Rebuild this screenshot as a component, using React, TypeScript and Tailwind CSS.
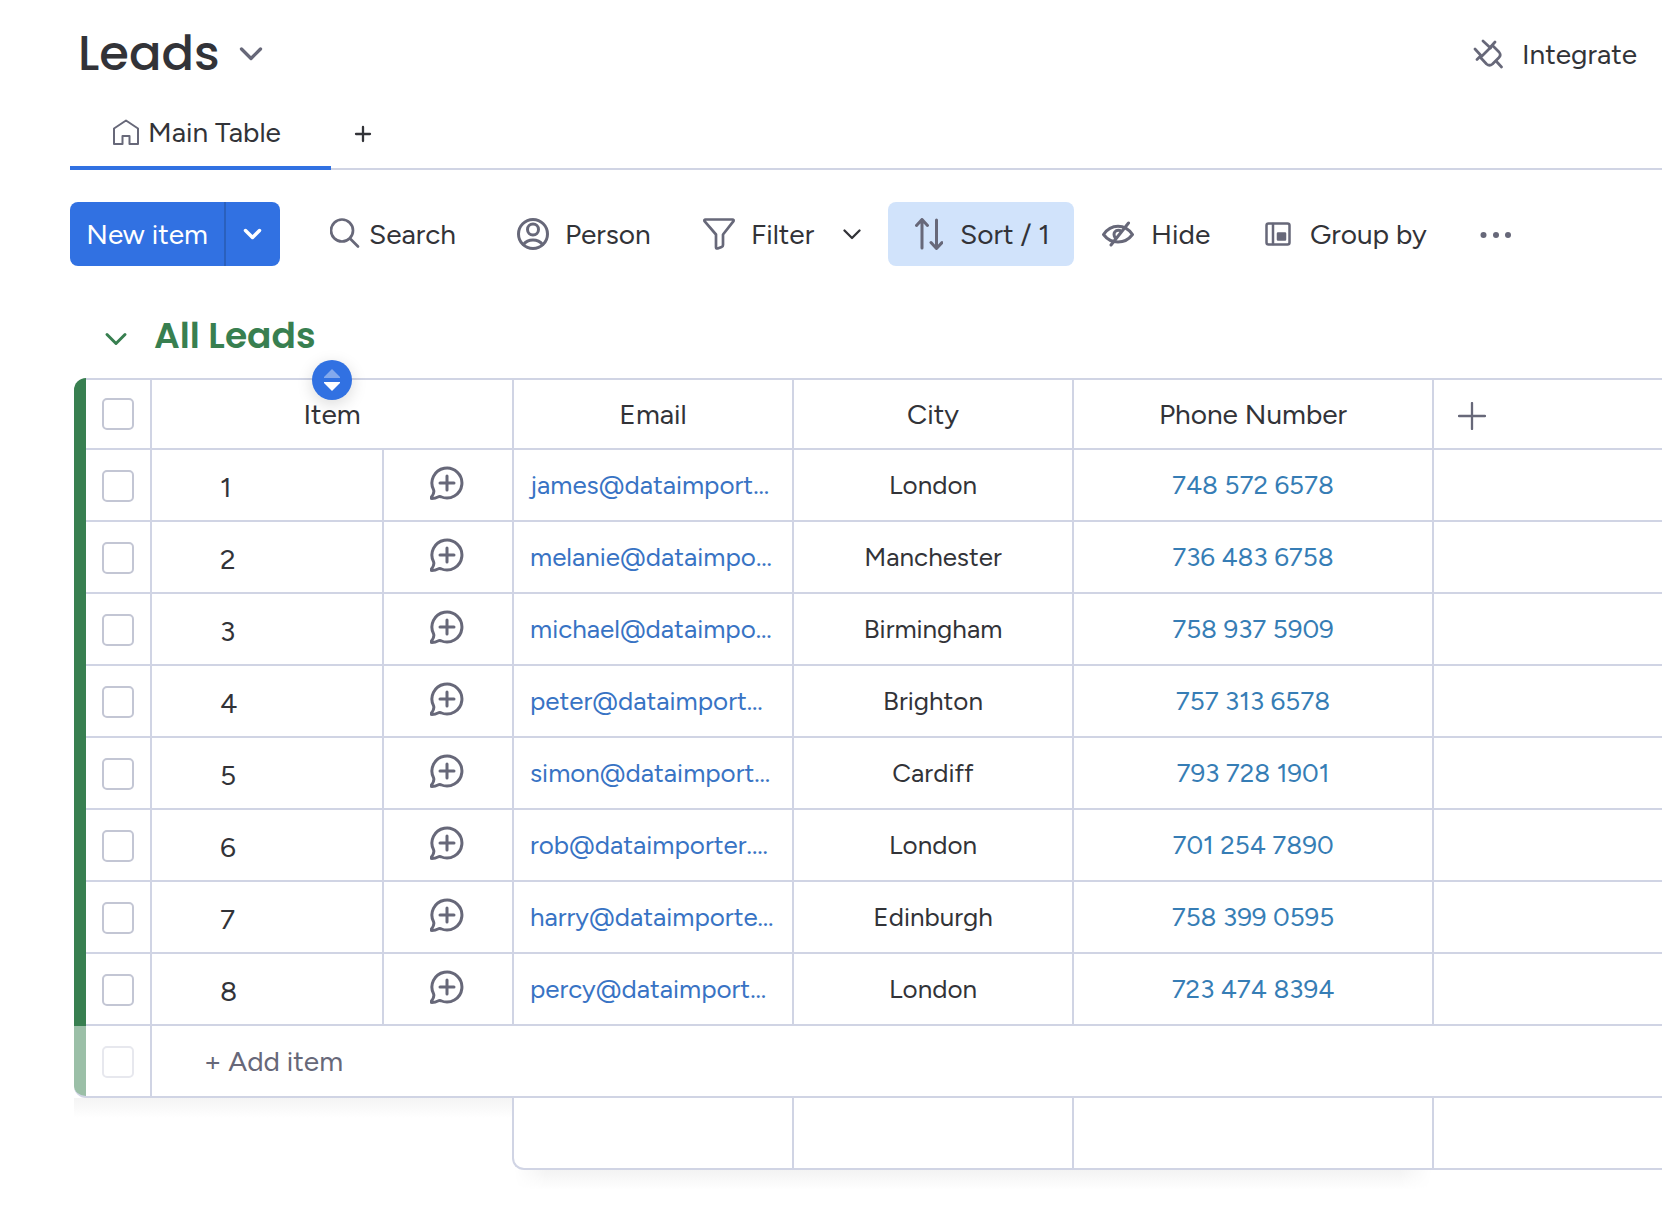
import type { ReactNode } from 'react'

interface Lead {
  id: number
  email: string
  city: string
  phone: string
}

const LEADS: Lead[] = [
  { id: 1, email: 'james@dataimport…', city: 'London', phone: '748 572 6578' },
  { id: 2, email: 'melanie@dataimpo…', city: 'Manchester', phone: '736 483 6758' },
  { id: 3, email: 'michael@dataimpo…', city: 'Birmingham', phone: '758 937 5909' },
  { id: 4, email: 'peter@dataimport…', city: 'Brighton', phone: '757 313 6578' },
  { id: 5, email: 'simon@dataimport…', city: 'Cardiff', phone: '793 728 1901' },
  { id: 6, email: 'rob@dataimporter.…', city: 'London', phone: '701 254 7890' },
  { id: 7, email: 'harry@dataimporte…', city: 'Edinburgh', phone: '758 399 0595' },
  { id: 8, email: 'percy@dataimport…', city: 'London', phone: '723 474 8394' },
]

const CELL = 'h-[72px] border-b-2 border-r-2 border-[#d0d4e4] p-0'
const CHECKBOX = 'block mx-auto size-8 appearance-none rounded-[5px] border-2 bg-white'

function Icon({ w, h, sw = 3, className = 'text-[#676879]', children }: {
  w: number
  h: number
  sw?: number
  className?: string
  children: ReactNode
}) {
  return (
    <svg
      width={w}
      height={h}
      viewBox={`0 0 ${w} ${h}`}
      fill="none"
      stroke="currentColor"
      strokeWidth={sw}
      strokeLinecap="round"
      strokeLinejoin="round"
      className={`shrink-0 ${className}`}
      aria-hidden="true"
    >
      {children}
    </svg>
  )
}

function BubbleIcon() {
  return (
    <Icon w={36} h={36}>
      <path d="M3.600 24.900A15 15 0 1 1 10.900 31.750Q9.400 31.300 7.900 32Q5.400 33.300 1.900 33.500Q.7 33.500 1.200 32.500C2.900 30 4.700 28 3.600 24.900Z" />
      <path d="M17 11v14M10 18h14" />
    </Icon>
  )
}

function Toolbar() {
  return (
    <div className="mt-8 flex h-16 items-center whitespace-nowrap">
      <div className="flex h-16 shrink-0 overflow-hidden rounded-lg bg-[#3171e2] text-white">
        <button className="w-[154px]">New item</button>
        <button aria-label="More item types" className="flex w-14 items-center justify-center border-l-2 border-[#2a60bd]">
          <Icon w={20} h={12} sw={3.5} className="text-white">
            <path d="M2.500 2.500l7 7 7-7" />
          </Icon>
        </button>
      </div>
      <button className="ml-8 flex h-16 w-[189px] shrink-0 items-center gap-[9px] pl-[18px]">
        <Icon w={30} h={32} sw={2.7}>
          <circle cx="12" cy="12.500" r="11" />
          <path d="M20 20.500l8 8" />
        </Icon>
        Search
      </button>
      <button className="flex h-16 w-[186px] shrink-0 items-center gap-4 pl-4">
        <Icon w={32} h={32}>
          <circle cx="16" cy="16" r="14.500" />
          <circle cx="16" cy="11.500" r="5.500" />
          <path d="M6.500 26.500C11 20.500 21 20.500 25.500 26.500" />
        </Icon>
        Person
      </button>
      <button className="flex h-16 w-[140px] shrink-0 items-center gap-4 pl-4">
        <Icon w={32} h={32} sw={2.7}>
          <path d="M2.500 1.500h27q1.500 0 1 1.700L20 16.500v10.500q0 1.500-1.400 2l-4 1.400q-1.600.4-1.600-1.200V16.500L1.500 3.200q-.5-1.700 1-1.700Z" />
        </Icon>
        Filter
      </button>
      <button aria-label="Filter options" className="flex h-16 w-[50px] shrink-0 items-center justify-center">
        <Icon w={18} h={12} sw={2.3} className="text-[#323338]">
          <path d="M1.500 2.500l7.500 7.500 7.500-7.500" />
        </Icon>
      </button>
      <button className="ml-[11px] flex h-16 w-[186px] shrink-0 items-center gap-[17px] rounded-lg bg-[#d1e3fb] pl-[27px]">
        <Icon w={28} h={32}>
          <path d="M7 30V2M1.500 7.500l5.500-6 5.500 6M21.500 2v28M16 24.500l5.500 6 5.500-6" />
        </Icon>
        Sort / 1
      </button>
      <button className="ml-3 flex h-16 w-[163px] shrink-0 items-center gap-[17px] pl-4">
        <Icon w={32} h={26}>
          <path d="M1.500 13.500C9 2.500 23 2.500 30.500 13.500C23 23.500 9 23.500 1.500 13.500Z" />
          <path d="M13 16.500C10.500 12 13.500 8.500 18 9.500M26.500 2L9 24" />
        </Icon>
        Hide
      </button>
      <button className="flex h-16 w-[215px] shrink-0 items-center gap-[19px] pl-4">
        <Icon w={26} h={24} sw={2.5}>
          <rect x="1.500" y="1.500" width="23" height="21" rx="2" />
          <path d="M8 2v20" />
          <rect x="13" y="11.500" width="7" height="6" fill="currentColor" />
        </Icon>
        Group by
      </button>
      <button aria-label="More actions" className="flex h-16 shrink-0 items-center px-4 pt-0.5">
        <svg width="32" height="6" viewBox="0 0 32 6" className="fill-[#676879]" aria-hidden="true">
          <circle cx="3.500" cy="3" r="3" />
          <circle cx="16" cy="3" r="3" />
          <circle cx="28" cy="3" r="3" />
        </svg>
      </button>
    </div>
  )
}

function LeadsTable() {
  return (
    <table className="w-full table-fixed border-separate border-spacing-0">
      <colgroup>
        <col className="w-3" />
        <col className="w-[66px]" />
        <col className="w-[232px]" />
        <col className="w-[130px]" />
        <col className="w-[280px]" />
        <col className="w-[280px]" />
        <col className="w-[360px]" />
        <col />
      </colgroup>
      <thead>
        <tr>
          <td className="rounded-tl-xl bg-[#387f50] p-0" />
          <th className={`${CELL} border-t-2`}>
            <input type="checkbox" aria-label="Select all" className={`${CHECKBOX} border-[#c3c6d4]`} />
          </th>
          <th colSpan={2} className={`${CELL} relative border-t-2 font-normal`}>
            <button
              aria-label="Sort by item"
              className="absolute -top-5 left-1/2 flex size-10 -translate-x-1/2 items-center justify-center rounded-full bg-[#3171e2] shadow-[0_4px_16px_rgba(0,0,0,0.15)]"
            >
              <svg width="16" height="22" viewBox="0 0 16 22" className="fill-white" aria-hidden="true">
                <path d="M8 0l8 8v1H0V8Z" opacity="0.400" />
                <path d="M8 22l8-8v-1H0v1Z" />
              </svg>
            </button>
            Item
          </th>
          <th className={`${CELL} border-t-2 font-normal`}>Email</th>
          <th className={`${CELL} border-t-2 font-normal`}>City</th>
          <th className={`${CELL} border-t-2 font-normal`}>Phone Number</th>
          <th className="border-y-2 border-[#d0d4e4] p-0 text-left">
            <button aria-label="Add column" className="ml-6 block pt-1">
              <Icon w={28} h={28} sw={2.3}>
                <path d="M14 1v26M1 14h26" />
              </Icon>
            </button>
          </th>
        </tr>
      </thead>
      <tbody>
        {LEADS.map((lead) => (
          <tr key={lead.id} className="text-[26px]">
            <td className="bg-[#387f50] p-0" />
            <td className={`${CELL} pt-0.5`}>
              <input type="checkbox" aria-label={`Select item ${lead.id}`} className={`${CHECKBOX} border-[#c3c6d4]`} />
            </td>
            <td className={`${CELL} pt-1 pl-[68px] text-[28px]`}>{lead.id}</td>
            <td className={`${CELL} pb-1`}>
              <button aria-label={`Start conversation on item ${lead.id}`} className="mx-auto block">
                <BubbleIcon />
              </button>
            </td>
            <td className={`${CELL} overflow-hidden pl-4 whitespace-nowrap`}>
              <a href="#" className="text-[#3873c4]">{lead.email}</a>
            </td>
            <td className={`${CELL} text-center`}>{lead.city}</td>
            <td className={`${CELL} text-center`}>
              <a href="#" className="text-[#367db5]">{lead.phone}</a>
            </td>
            <td className="border-b-2 border-[#d0d4e4] p-0" />
          </tr>
        ))}
        <tr>
          <td className="rounded-bl-xl border-b-2 border-[#d0d4e4] bg-[#9bbfa7] p-0" />
          <td className={`${CELL} pt-0.5`}>
            <input type="checkbox" disabled aria-label="Select new item" className={`${CHECKBOX} border-[#e7e8ee]`} />
          </td>
          <td colSpan={6} className="border-b-2 border-[#d0d4e4] p-0 pl-[52px]">
            <button className="text-[#676879]">+ Add item</button>
          </td>
        </tr>
      </tbody>
      <tfoot>
        <tr>
          <td colSpan={4} className="p-0 align-top">
            <div className="h-5 bg-linear-to-b from-[#f4f4f4] to-white" />
          </td>
          <td className="h-[72px] border-r-2 border-[#d0d4e4] p-0">
            <div className="-ml-0.5 h-[72px] rounded-bl-xl border-b-2 border-l-2 border-[#d0d4e4] bg-white" />
          </td>
          <td className={CELL} />
          <td className={CELL} />
          <td className="border-b-2 border-[#d0d4e4] p-0" />
        </tr>
      </tfoot>
    </table>
  )
}

export default function App() {
  return (
    <main className="min-h-screen overflow-x-hidden bg-white pt-[26px] pb-10 pl-[70px] font-['Figtree','Lato',sans-serif] text-[28px] leading-9 text-[#323338]">
      <header className="flex h-14 items-center justify-between pr-[25px]">
        <div className="flex items-center gap-[19px] pl-2">
          <h1 className="font-['Poppins','Inter',sans-serif] text-[48px] leading-[56px] font-medium">Leads</h1>
          <button aria-label="Board options">
            <Icon w={24} h={14} sw={3.3}>
              <path d="M2.500 2l9.500 9.500 9.500-9.500" />
            </Icon>
          </button>
        </div>
        <button className="flex items-center gap-[19px]">
          <Icon w={30} h={30} sw={2.7}>
            <path d="M7.500 18.500L19.500 6.500L26 13Q28.500 16 26 18.500L19.500 25Q16.500 27.500 13.500 25Z" />
            <path d="M4 20.500l4-4M17.500 8l4.500-5M2 10l5.500 6M10 2l7.500 7M23.500 22.500l5 5.500" />
          </Icon>
          Integrate
        </button>
      </header>

      <nav className="mt-3 flex h-[76px] border-b-2 border-[#d0d4e4]">
        <a href="#" className="-mb-0.5 flex h-[76px] w-[261px] items-center gap-[9px] border-b-4 border-[#3171e2] pt-1 pl-[43px]">
          <Icon w={26} h={26} sw={2}>
            <path d="M1 9.500L13 1.500l12 8V25H16.500V17h-7v8H1Z" />
          </Icon>
          Main Table
        </a>
        <button aria-label="Add view" className="flex w-16 items-center justify-center pt-1.5">
          <Icon w={18} h={18} sw={2.3} className="text-[#323338]">
            <path d="M9 2v14M2 9h14" />
          </Icon>
        </button>
      </nav>

      <Toolbar />

      <section className="mt-11 ml-1">
        <div className="flex h-[68px] items-start gap-[26px] pl-[30px]">
          <button aria-label="Collapse group" className="flex h-[58px] items-center">
            <Icon w={24} h={14} className="text-[#387f50]">
              <path d="M3 2.500l9 9 9-9" />
            </Icon>
          </button>
          <h2 className="font-['Poppins','Inter',sans-serif] text-[36px] leading-[52px] font-semibold text-[#387f50]">All Leads</h2>
        </div>
        <LeadsTable />
        <div className="ml-[440px] h-5 w-[918px] bg-linear-to-b from-[#f3f3f3] to-white [mask-image:linear-gradient(to_right,transparent,black_32px,black_calc(100%-32px),transparent)]" />
      </section>
    </main>
  )
}
